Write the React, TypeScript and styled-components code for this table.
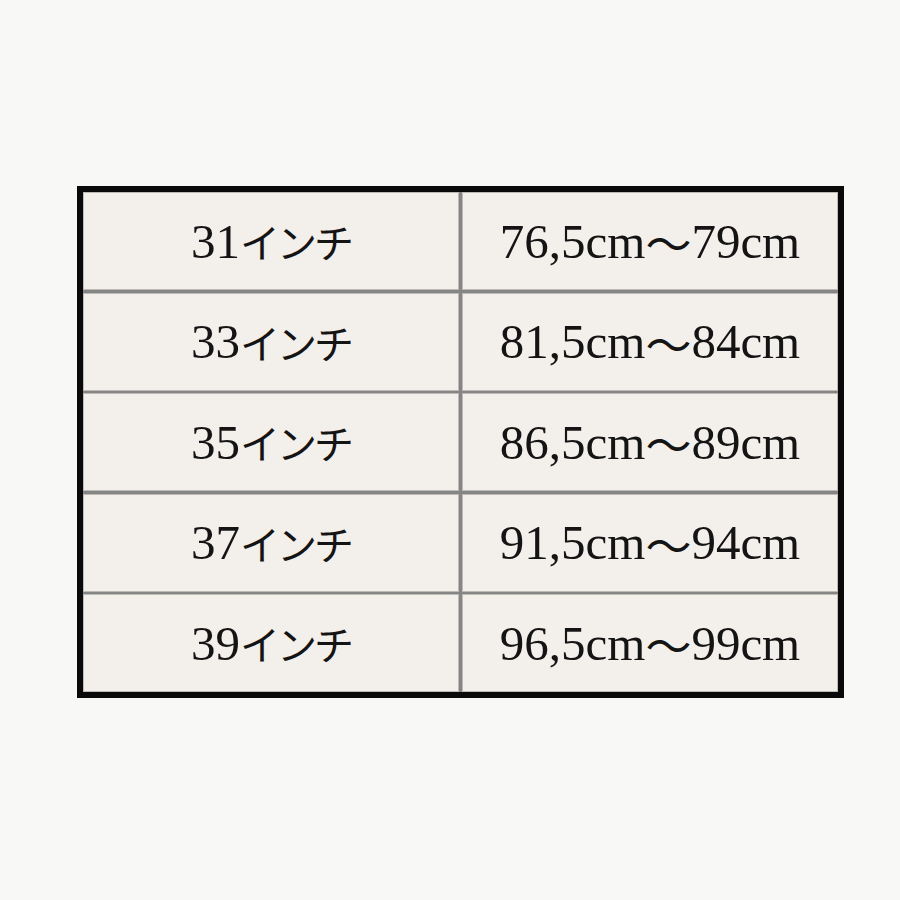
import React from 'react';
import styled, {createGlobalStyle} from 'styled-components';

const GlobalStyle = createGlobalStyle`
  html, body {
    margin: 0;
    padding: 0;
    background: #f8f8f7;
  }
`;

const Page = styled.div`
  width: 900px;
  height: 900px;
  padding: 186px 0 0 77px;
  box-sizing: border-box;
`;

const SizeTable = styled.div`
  width: 767px;
  box-sizing: border-box;
  border: 6px solid #0a0a0a;
  background: #858585;
  display: grid;
  grid-template-columns: 1fr 1fr;
  grid-auto-rows: 98px;
  column-gap: 3px;
  row-gap: 2.5px;
`;

const Cell = styled.div`
  display: flex;
  align-items: center;
  justify-content: center;
  background: #f3efeb;
  border: 1px solid #bdbab6;
  font-family: 'Liberation Serif', 'Noto Sans CJK JP', serif;
  font-size: 49px;
  line-height: 1;
  color: #141414;
`;

const Unit = styled.span<{$size: number; $tight?: boolean}>`
  font-family: 'Noto Sans CJK JP', sans-serif;
  font-size: ${(p) => p.$size}px;
  letter-spacing: ${(p) => (p.$tight ? '-3px' : '0')};
`;

const rows = [
  {inch: 31, from: '76,5', to: '79'},
  {inch: 33, from: '81,5', to: '84'},
  {inch: 35, from: '86,5', to: '89'},
  {inch: 37, from: '91,5', to: '94'},
  {inch: 39, from: '96,5', to: '99'},
];

export default function App() {
  return (
    <Page>
      <GlobalStyle />
      <SizeTable>
        {rows.map((r) => (
          <React.Fragment key={r.inch}>
            <Cell>
              {r.inch}
              <Unit $size={40} $tight>
                インチ
              </Unit>
            </Cell>
            <Cell>
              {r.from}cm<Unit $size={46}>〜</Unit>
              {r.to}cm
            </Cell>
          </React.Fragment>
        ))}
      </SizeTable>
    </Page>
  );
}
